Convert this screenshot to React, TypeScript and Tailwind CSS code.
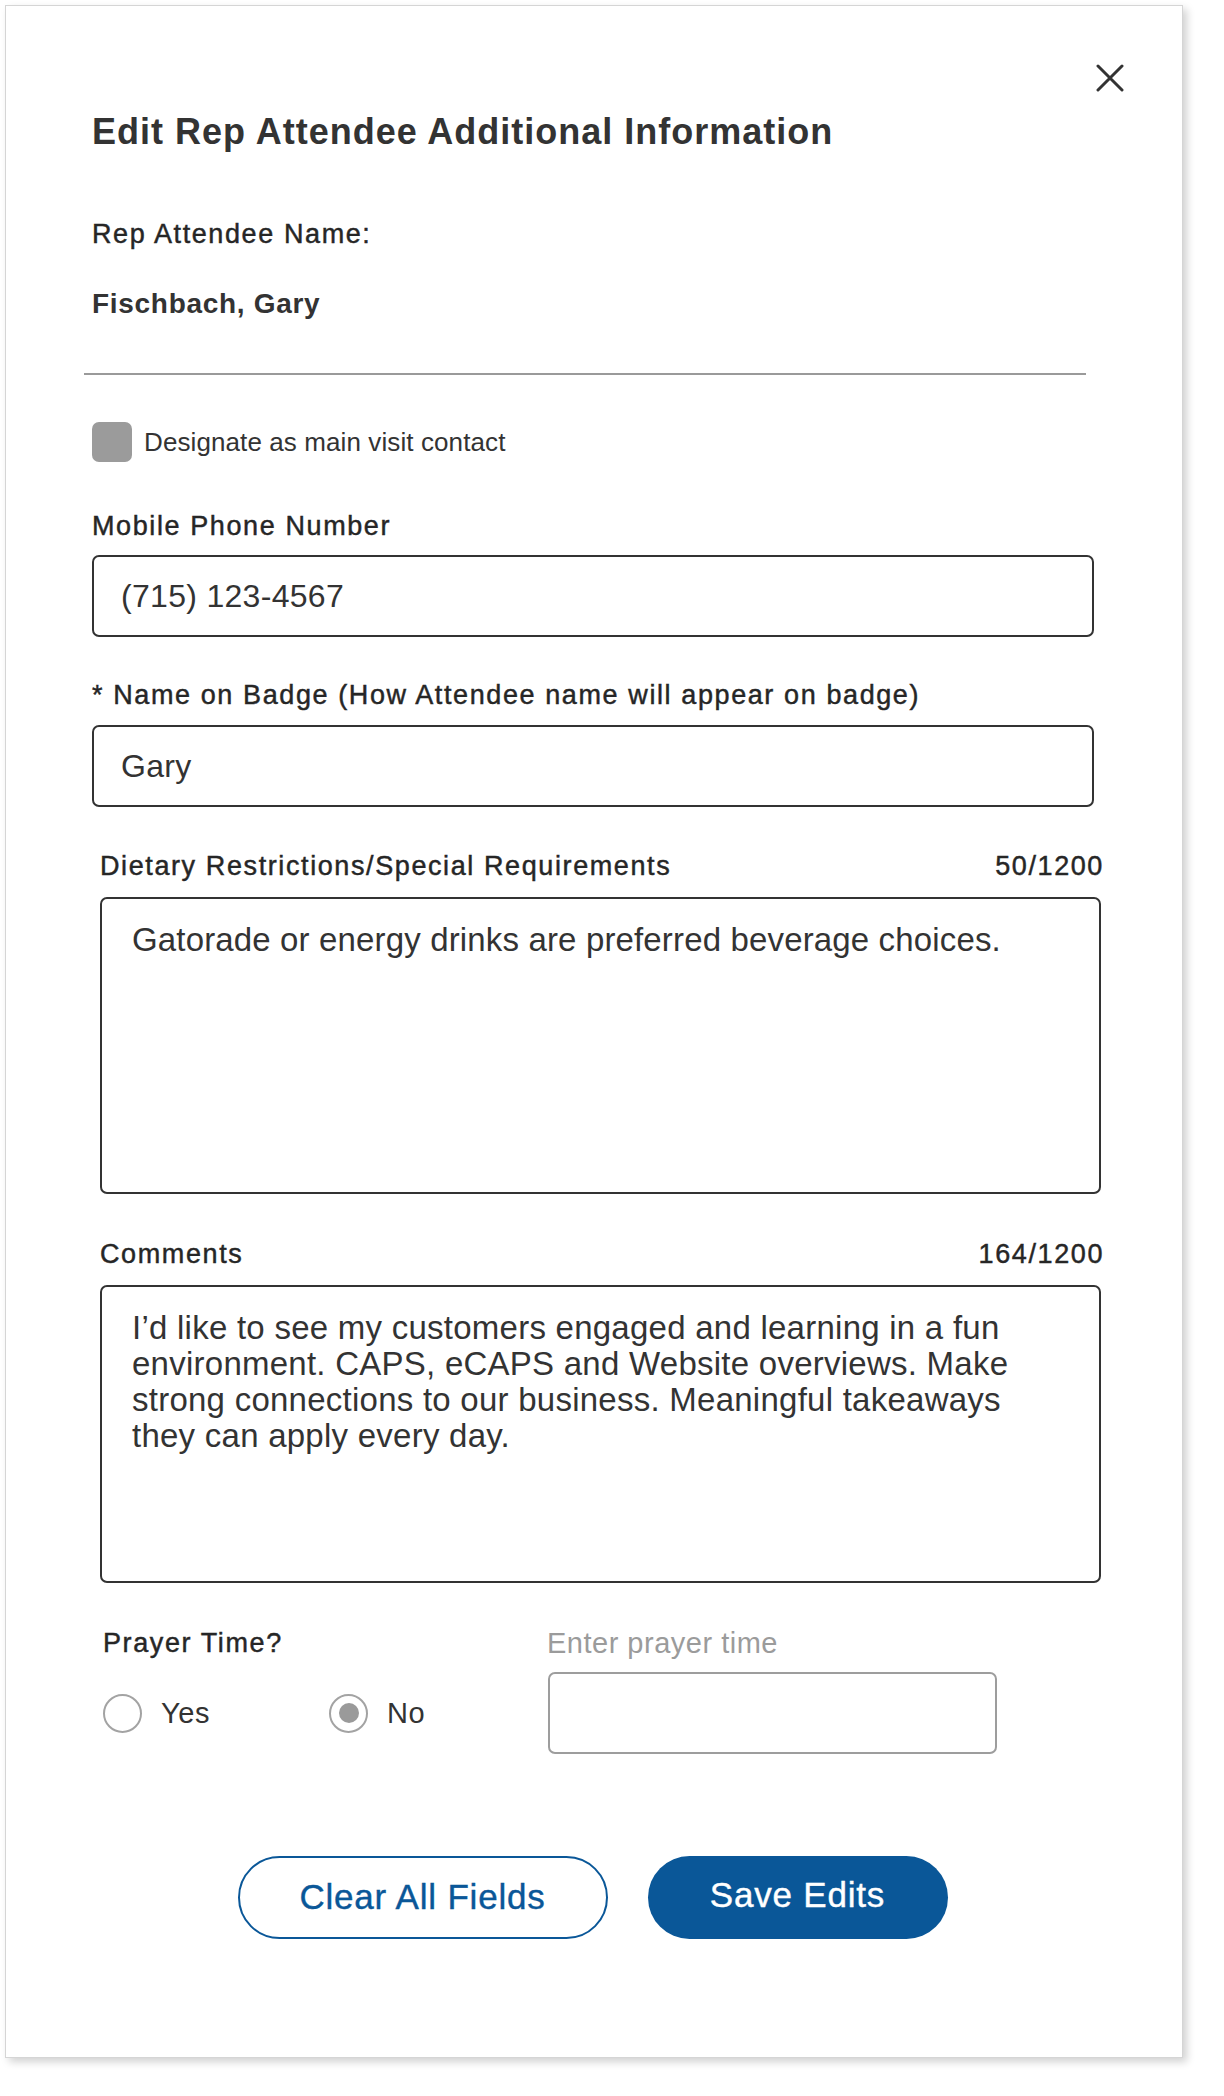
import React from 'react';

const label = "text-[27px] leading-[32px] tracking-[1.6px] text-[#262626] [-webkit-text-stroke:0.45px_#262626]";

const CloseIcon: React.FC = () => (
  <svg width="28" height="28" viewBox="0 0 28 28" fill="none">
    <path d="M2 2L26 26M26 2L2 26" stroke="#333333" strokeWidth="3" strokeLinecap="round" />
  </svg>
);

const Radio: React.FC<{ checked?: boolean; text: string; className?: string }> = ({ checked, text, className }) => (
  <label className={`flex items-center gap-[19px] ${className ?? ''}`}>
    <span className="flex h-[39px] w-[39px] shrink-0 items-center justify-center rounded-full border-2 border-[#a3a3a3] bg-white">
      {checked && <span className="h-[20px] w-[20px] rounded-full bg-[#9a9a9a]"></span>}
    </span>
    <span className="text-[29px] leading-[32px] tracking-[0.6px] text-[#333]">{text}</span>
  </label>
);

const App: React.FC = () => {
  return (
    <div className="min-h-screen bg-white p-[5px] font-['Liberation_Sans',Arial,sans-serif]">
      <div className="flex h-[2053px] w-[1178px] flex-col border border-[#d5d5d5] bg-white shadow-[4px_4px_8px_rgba(0,0,0,0.18)]">
        <div className="mt-[58px] flex h-[28px] justify-end pr-[58px]">
          <button className="h-[28px] w-[28px]" aria-label="Close">
            <CloseIcon />
          </button>
        </div>

        <div className="flex flex-col pl-[86px]">
          <h1 className="mt-[18px] text-[36px] font-bold leading-[44px] tracking-[1px] text-[#333]">
            Edit Rep Attendee Additional Information
          </h1>

          <div className={`mt-[64px] ${label}`}>Rep Attendee Name:</div>
          <div className="mt-[37px] text-[28px] font-bold leading-[34px] tracking-[0.7px] text-[#333]">Fischbach, Gary</div>

          <div className="-ml-2 mt-[52px] h-[2px] w-[1002px] bg-[#9a9a9a]"></div>

          <div className="mt-[47px] flex h-[40px] items-center gap-[12px]">
            <span className="h-[40px] w-[40px] rounded-[7px] bg-[#9b9b9b]"></span>
            <span className="text-[26px] leading-[32px] tracking-[0.1px] text-[#333]">Designate as main visit contact</span>
          </div>

          <div className={`mt-[48px] ${label}`}>Mobile Phone Number</div>
          <input
            defaultValue="(715) 123-4567"
            className="mt-[13px] h-[82px] w-[1002px] rounded-[7px] border-2 border-[#333] pl-[27px] text-[32px] tracking-[0.3px] text-[#333] outline-none"
          />

          <div className={`mt-[42px] ${label}`}>* Name on Badge (How Attendee name will appear on badge)</div>
          <input
            defaultValue="Gary"
            className="mt-[14px] h-[82px] w-[1002px] rounded-[7px] border-2 border-[#333] pl-[27px] text-[32px] tracking-[0.3px] text-[#333] outline-none"
          />

          <div className="flex flex-col pl-2">
            <div className={`mt-[43px] flex w-[1004px] justify-between ${label}`}>
              <span>Dietary Restrictions/Special Requirements</span>
              <span>50/1200</span>
            </div>
            <textarea
              defaultValue="Gatorade or energy drinks are preferred beverage choices."
              className="mt-[15px] h-[297px] w-[1001px] resize-none overflow-hidden rounded-[7px] border-2 border-[#333] pl-[30px] pr-[24px] pt-[23px] text-[33px] leading-[36px] tracking-[0.15px] text-[#333] outline-none"
            />

            <div className={`mt-[44px] flex w-[1004px] justify-between ${label}`}>
              <span>Comments</span>
              <span>164/1200</span>
            </div>
            <textarea
              defaultValue={"I’d like to see my customers engaged and learning in a fun\nenvironment. CAPS, eCAPS and Website overviews. Make\nstrong connections to our business. Meaningful takeaways\nthey can apply every day."}
              className="mt-[15px] h-[298px] w-[1001px] resize-none overflow-hidden rounded-[7px] border-2 border-[#333] pl-[30px] pr-[24px] pt-[23px] text-[33px] leading-[36px] tracking-[0.25px] text-[#333] outline-none"
            />

            <div className="ml-[3px] mt-[44px] flex">
              <div className={`w-[444px] ${label}`}>Prayer Time?</div>
              <div className="text-[29px] leading-[32px] tracking-[0.5px] text-[#9b9b9b]">Enter prayer time</div>
            </div>
            <div className="ml-[3px] mt-[13px] flex items-center">
              <div className="flex w-[445px] items-center">
                <Radio text="Yes" className="w-[226px]" />
                <Radio text="No" checked />
              </div>
              <input className="h-[82px] w-[449px] rounded-[7px] border-2 border-[#9d9d9d] outline-none" />
            </div>
          </div>
        </div>

        <div className="mt-[102px] flex justify-center gap-10 pr-[3px]">
          <button className="h-[83px] w-[370px] rounded-full border-2 border-[#0a5798] bg-white text-[35px] tracking-[0.8px] text-[#0a5798] [-webkit-text-stroke:0.4px_#0a5798]">
            Clear All Fields
          </button>
          <button className="h-[83px] w-[300px] rounded-full bg-[#0a5798] pb-1 text-[35px] tracking-[0.8px] text-white [-webkit-text-stroke:0.4px_#ffffff]">
            Save Edits
          </button>
        </div>
      </div>
    </div>
  );
};

export default App;
